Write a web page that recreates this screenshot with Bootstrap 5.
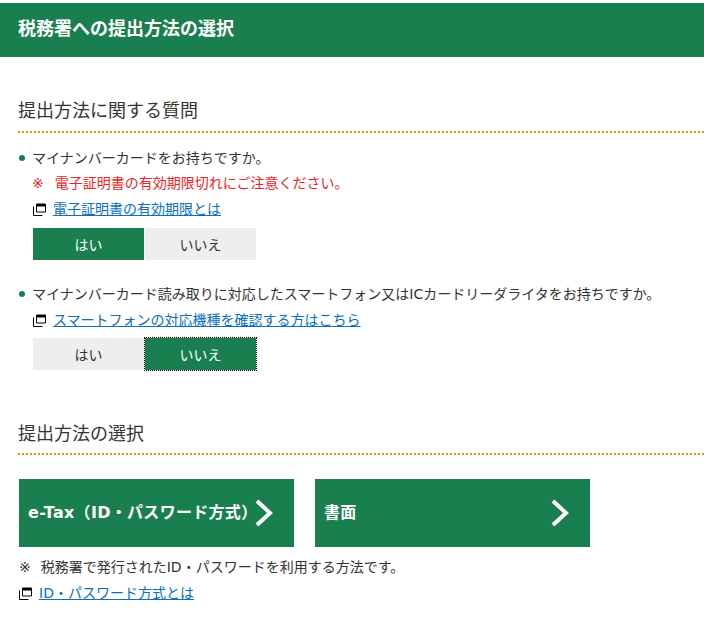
<!DOCTYPE html>
<html lang="ja">
<head>
<meta charset="utf-8">
<title>税務署への提出方法の選択</title>
<link rel="stylesheet" href="https://cdn.jsdelivr.net/npm/bootstrap@5.3.0/dist/css/bootstrap.min.css">
<style>
body{font-family:"DejaVu Sans","Noto Sans CJK JP","Liberation Sans",sans-serif;font-size:14px;color:#333;background:#fff;padding-top:3px;line-height:25px}
.page-title{background:#1a7f4e;color:#fff;height:54px;padding-left:18px;font-size:18px;font-weight:700;line-height:52px;margin:0}
.sec-title{font-size:18px;font-weight:400;line-height:26px;padding:2px 0 7px;margin:0 0 0 18px;border-bottom:2px dotted #e8900c;color:#333}
.first-sec{margin-top:39px}
.second-sec{margin-top:48px;padding:3px 0 6px}
.q-block{padding-left:33px;position:relative;margin-top:13px}
.q-block+.q-block{margin-top:22px}
.q-block+.q-block .choice{margin-top:5px}
.q-block>div:first-child{margin-left:-1px}
.q-block::before{content:"";position:absolute;left:19px;top:9px;width:6px;height:6px;border-radius:50%;background:#1a7f4e}
.warn{color:#e8262a;margin-left:-1px}
.warn .note-mark{margin-right:11px}
.ext-link{display:flex;align-items:center;gap:7px}
.q-block .ext-link{padding-top:1px}
.ext-link a{color:#0a6fbd}
.win-icon{width:13px;height:13px;flex:none}
.choice{display:flex;gap:1px;margin-top:6px}
.choice-btn{width:111px;height:32px;border:0;background:#eee;color:#333;font-size:14px;line-height:27px;padding:2px 0 0;border-radius:0}
.choice-btn.on{background:#1a7f4e;color:#fff}
.choice-btn.focus-dots{outline:1px dotted #000;outline-offset:0}
.method-row{display:flex;gap:21px;margin:24px 0 7px 19px}
.method-btn{width:275px;height:68px;background:#1a7f4e;color:#fff;font-weight:700;font-size:16px;padding:0 9px;display:flex;align-items:center;justify-content:space-between;text-decoration:none;white-space:nowrap;letter-spacing:.3px}
.method-btn span{margin:0 -8px 1px 0}
.method-btn svg{width:20px;height:28px;flex:none;margin-right:11px}
.note-area{margin-left:19px;line-height:26px}
.note-mark{margin-right:10px}
</style>
</head>
<body>
<h1 class="page-title">税務署への提出方法の選択</h1>

<h2 class="sec-title first-sec">提出方法に関する質問</h2>

<div class="q-block">
  <div>マイナンバーカードをお持ちですか。</div>
  <div class="warn"><span class="note-mark">※</span>電子証明書の有効期限切れにご注意ください。</div>
  <div class="ext-link">
    <svg class="win-icon" viewBox="0 0 13 13"><path d="M3.500 1h9v8h-9z" fill="none" stroke="#000"/><path d="M3 1h10v2.500H3z" fill="#000"/><path d="M.5 3.500v9h9" fill="none" stroke="#000"/></svg>
    <a href="#">電子証明書の有効期限とは</a>
  </div>
  <div class="choice">
    <button type="button" class="btn choice-btn on">はい</button>
    <button type="button" class="btn choice-btn">いいえ</button>
  </div>
</div>

<div class="q-block">
  <div>マイナンバーカード読み取りに対応したスマートフォン又はICカードリーダライタをお持ちですか。</div>
  <div class="ext-link">
    <svg class="win-icon" viewBox="0 0 13 13"><path d="M3.500 1h9v8h-9z" fill="none" stroke="#000"/><path d="M3 1h10v2.500H3z" fill="#000"/><path d="M.5 3.500v9h9" fill="none" stroke="#000"/></svg>
    <a href="#">スマートフォンの対応機種を確認する方はこちら</a>
  </div>
  <div class="choice">
    <button type="button" class="btn choice-btn">はい</button>
    <button type="button" class="btn choice-btn on focus-dots">いいえ</button>
  </div>
</div>

<h2 class="sec-title second-sec">提出方法の選択</h2>

<div class="method-row">
  <a href="#" class="method-btn"><span>e-Tax（ID・パスワード方式）</span><svg viewBox="0 0 20 28"><path d="M3 2l13 12L3 26" fill="none" stroke="#fff" stroke-width="4"/></svg></a>
  <a href="#" class="method-btn"><span>書面</span><svg viewBox="0 0 20 28"><path d="M3 2l13 12L3 26" fill="none" stroke="#fff" stroke-width="4"/></svg></a>
</div>

<div class="note-area">
  <div><span class="note-mark">※</span>税務署で発行されたID・パスワードを利用する方法です。</div>
  <div class="ext-link">
    <svg class="win-icon" viewBox="0 0 13 13"><path d="M3.500 1h9v8h-9z" fill="none" stroke="#000"/><path d="M3 1h10v2.500H3z" fill="#000"/><path d="M.5 3.500v9h9" fill="none" stroke="#000"/></svg>
    <a href="#">ID・パスワード方式とは</a>
  </div>
</div>
<script src="https://cdn.jsdelivr.net/npm/bootstrap@5.3.0/dist/js/bootstrap.bundle.min.js"></script>
</body>
</html>
